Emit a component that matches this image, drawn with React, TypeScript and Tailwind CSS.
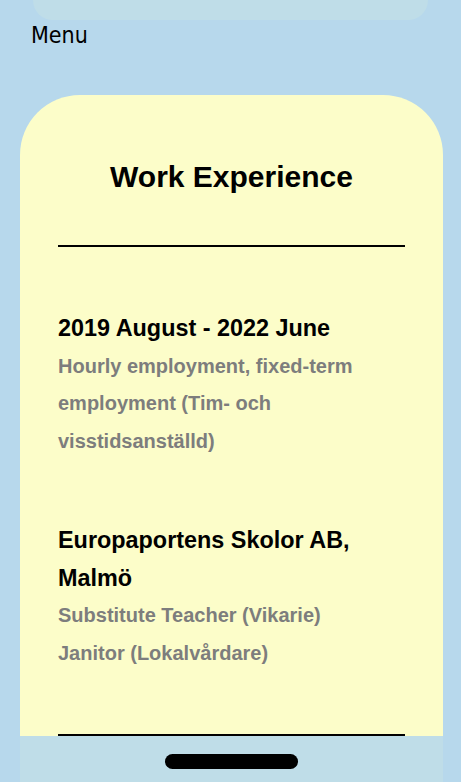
import React from 'react';

const jobs = [
  {
    title: '2019 August - 2022 June',
    lines: ['Hourly employment, fixed-term employment (Tim- och visstidsanställd)'],
  },
  {
    title: 'Europaportens Skolor AB, Malmö',
    lines: ['Substitute Teacher (Vikarie)', 'Janitor (Lokalvårdare)'],
  },
];

const App: React.FC = () => {
  return (
    <div className="relative h-[782px] w-full overflow-hidden bg-[#b7d8ec]" style={{ fontFamily: '"Liberation Sans", Arial, sans-serif' }}>
      {/* Top nav remnant */}
      <div className="mx-[33px] h-[20px] rounded-b-[30px] bg-[#bfdde8]" />

      <div className="pl-[31px] pt-[1px] text-[23px] leading-[28px] text-black" style={{ fontFamily: '"DejaVu Sans Condensed", "DejaVu Sans", sans-serif' }}>
        Menu
      </div>

      {/* Card */}
      <section className="ml-[20px] mr-[18px] mt-[46px] rounded-t-[60px] bg-[#fcfdc9] px-[38px] pt-[62px]">
        <h2 className="text-center text-[30px] font-bold leading-[40px] text-black">Work Experience</h2>
        <div className="mt-[48px] h-[2px] bg-black" />

        <div className="pt-[63px]">
          {jobs.map((j, i) => (
            <div key={i} className={i > 0 ? 'mt-[62px]' : ''}>
              <h3 className="text-[23.4px] font-bold leading-[37.5px] text-black">{j.title}</h3>
              {j.lines.map((l, k) => (
                <p key={k} className="text-[20px] font-bold leading-[37.5px] text-[#7d7d7d]">{l}</p>
              ))}
            </div>
          ))}
        </div>
        <div className="mt-[62px] h-[2px] bg-black" />
        <div className="h-[60px]" />
      </section>

      {/* Bottom bar */}
      <div className="absolute bottom-0 left-[20px] right-[18px] flex h-[46px] justify-center bg-[#bfdde8] pt-[18px]">
        <div className="h-[15px] w-[133px] rounded-full bg-black" />
      </div>
    </div>
  );
};

export default App;
